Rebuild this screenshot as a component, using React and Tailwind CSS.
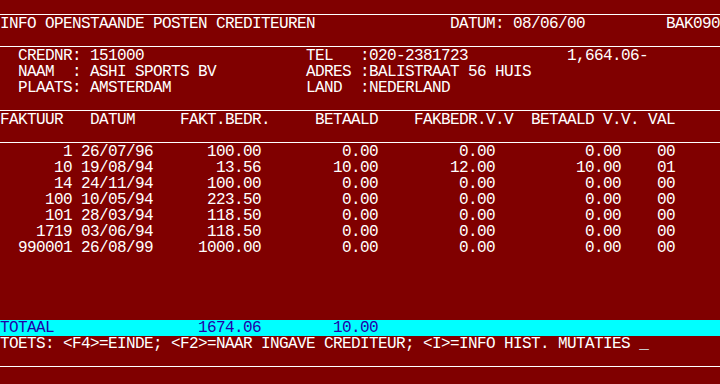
const COLS = 80;

// bouwt een schermregel van 80 tekens uit [kolom, tekst] stukken
function row(...parts) {
  let s = "";
  for (const [col, text] of parts) {
    s = s.padEnd(col, " ") + text;
  }
  return s.padEnd(COLS, " ").slice(0, COLS);
}

const posten = [
  { nr: "1", datum: "26/07/96", bedr: "100.00", betaald: "0.00", vv: "0.00", betvv: "0.00", val: "00" },
  { nr: "10", datum: "19/08/94", bedr: "13.56", betaald: "10.00", vv: "12.00", betvv: "10.00", val: "01" },
  { nr: "14", datum: "24/11/94", bedr: "100.00", betaald: "0.00", vv: "0.00", betvv: "0.00", val: "00" },
  { nr: "100", datum: "10/05/94", bedr: "223.50", betaald: "0.00", vv: "0.00", betvv: "0.00", val: "00" },
  { nr: "101", datum: "28/03/94", bedr: "118.50", betaald: "0.00", vv: "0.00", betvv: "0.00", val: "00" },
  { nr: "1719", datum: "03/06/94", bedr: "118.50", betaald: "0.00", vv: "0.00", betvv: "0.00", val: "00" },
  { nr: "990001", datum: "26/08/99", bedr: "1000.00", betaald: "0.00", vv: "0.00", betvv: "0.00", val: "00" },
];

function postRegel(p) {
  return row(
    [0, p.nr.padStart(8, " ")],
    [9, p.datum],
    [17, p.bedr.padStart(12, " ")],
    [29, p.betaald.padStart(13, " ")],
    [42, p.vv.padStart(13, " ")],
    [55, p.betvv.padStart(14, " ")],
    [73, p.val]
  );
}

function Lijn() {
  return (
    <div className="h-4 flex flex-col justify-end">
      <div className="h-px bg-white mb-px" />
    </div>
  );
}

function Regel({ children, className = "" }) {
  return <div className={`h-4 whitespace-pre overflow-hidden ${className}`}>{children}</div>;
}

export default function App() {
  return (
    <div
      className="w-[720px] h-[384px] overflow-hidden bg-[#800000] text-white text-[16px] leading-4 tracking-[-0.6px]"
      style={{ fontFamily: '"Liberation Mono", monospace' }}
    >
      <Lijn />
      <Regel>{row([0, "INFO OPENSTAANDE POSTEN CREDITEUREN"], [50, "DATUM: 08/06/00"], [74, "BAK090"])}</Regel>
      <Lijn />
      <Regel>{row([2, "CREDNR: 151000"], [34, "TEL"], [40, ":020-2381723"], [63, "1,664.06-"])}</Regel>
      <Regel>{row([2, "NAAM  : ASHI SPORTS BV"], [34, "ADRES"], [40, ":BALISTRAAT 56 HUIS"])}</Regel>
      <Regel>{row([2, "PLAATS: AMSTERDAM"], [34, "LAND"], [40, ":NEDERLAND"])}</Regel>
      <Lijn />
      <Regel>
        {row([0, "FAKTUUR"], [10, "DATUM"], [20, "FAKT.BEDR."], [35, "BETAALD"], [46, "FAKBEDR.V.V"], [59, "BETAALD V.V."], [72, "VAL"])}
      </Regel>
      <Lijn />
      {posten.map((p) => (
        <Regel key={p.nr}>{postRegel(p)}</Regel>
      ))}
      <Regel />
      <Regel />
      <Regel />
      <Regel />
      <Regel className="bg-[#00ffff] text-[#2000a8]">
        {row([0, "TOTAAL"], [22, "1674.06"], [37, "10.00"])}
      </Regel>
      <Regel>
        TOETS: &lt;F4&gt;=EINDE; &lt;F2&gt;=NAAR INGAVE CREDITEUR; &lt;I&gt;=INFO HIST. MUTATIES{" "}
        <span className="text-[#c8c8c8]">_</span>
      </Regel>
      <Lijn />
      <Regel />
    </div>
  );
}
